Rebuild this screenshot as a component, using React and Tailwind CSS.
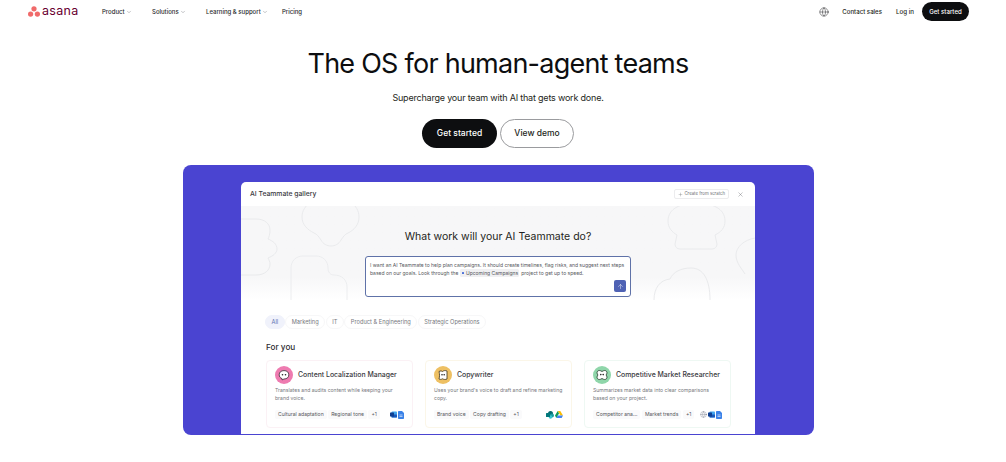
import React from 'react';
import { ChevronDown, Globe, Plus, X, ArrowUp } from 'lucide-react';

const navLeft = [
  { label: 'Product', caret: true, w: 'w-[50px]' },
  { label: 'Solutions', caret: true, w: 'w-[54px]' },
  { label: 'Learning & support', caret: true, w: 'w-[76px]' },
  { label: 'Pricing', caret: false, w: 'w-auto' },
];

const tabs = [
  { label: 'All', active: true },
  { label: 'Marketing' },
  { label: 'IT' },
  { label: 'Product & Engineering' },
  { label: 'Strategic Operations' },
];

const AsanaLogo = () => (
  <svg width="12" height="11" viewBox="0 0 11 10" className="shrink-0">
    <circle cx="5.5" cy="2.5" r="2.4" fill="#f06a6a" />
    <circle cx="2.4" cy="7.4" r="2.4" fill="#f06a6a" />
    <circle cx="8.6" cy="7.4" r="2.4" fill="#f06a6a" />
  </svg>
);

const PinkFace = () => (
  <svg width="18" height="18" viewBox="0 0 18 18">
    <circle cx="9" cy="9" r="9" fill="#ee7bb0" />
    <path d="M9 4.6c3 0 4.8 1.700 4.800 4.200S12 13 9 13l-2 .9v-1.300C5.200 12 4.200 10.600 4.200 8.800 4.200 6.300 6 4.600 9 4.600z" fill="#fff" stroke="#3a2a35" strokeWidth="0.8" />
    <circle cx="7.500" cy="8.800" r="0.800" fill="#222" />
    <circle cx="10.500" cy="8.800" r="0.800" fill="#222" />
  </svg>
);

const YellowFace = () => (
  <svg width="18" height="18" viewBox="0 0 18 18">
    <circle cx="9" cy="9" r="9" fill="#eec063" />
    <path d="M5 5.500c1.500-.8 2.500-.6 3.500 0 1.300-1 3-1.200 4.500-.5v8c-1.500.7-3 .6-4.500-.2-1.200.7-2.400.8-3.500.2 .7-2.500.7-5 0-7.500z" fill="#fff" stroke="#3d321c" strokeWidth="0.8" />
    <circle cx="8" cy="8.800" r="0.800" fill="#222" />
    <circle cx="10.200" cy="8.800" r="0.800" fill="#222" />
  </svg>
);

const GreenFace = () => (
  <svg width="18" height="18" viewBox="0 0 18 18">
    <circle cx="9" cy="9" r="9" fill="#8fd6aa" />
    <path d="M6.300 4.500c1 0 1.800.5 2.700 1 .9-.5 1.700-1 2.700-1 1.500 0 2.300 1.200 2.300 2.300 0 1-.5 1.600-1 2.200.5.600 1 1.200 1 2.200 0 1.100-.8 2.300-2.300 2.300-1 0-1.800-.5-2.700-1-.9.500-1.700 1-2.700 1C4.800 13.500 4 12.300 4 11.200c0-1 .5-1.600 1-2.200-.5-.6-1-1.200-1-2.200C4 5.700 4.800 4.500 6.300 4.500z" fill="#fff" stroke="#24382c" strokeWidth="0.8" />
    <circle cx="7.800" cy="8.600" r="0.800" fill="#222" />
    <circle cx="10.200" cy="8.600" r="0.800" fill="#222" />
  </svg>
);

const WordIcon = () => (
  <svg width="7" height="7" viewBox="0 0 7 7">
    <rect x="1.500" y="0.500" width="5.500" height="6" rx="0.800" fill="#41a5ee" />
    <rect x="1.500" y="3.500" width="5.500" height="3" rx="0.500" fill="#185abd" />
    <rect x="0" y="1.500" width="4" height="4" rx="0.500" fill="#103f91" />
  </svg>
);

const DocIcon = () => (
  <svg width="6" height="8" viewBox="0 0 6 8">
    <path d="M0.800 0H4l2 2v5.200a.8.8 0 0 1-.8.800H.8a.8.8 0 0 1-.8-.8V.8A.8.8 0 0 1 .8 0z" fill="#3b82e8" />
    <path d="M1.500 4h3M1.500 5.500h3" stroke="#fff" strokeWidth="0.600" />
  </svg>
);

const SharepointIcon = () => (
  <svg width="8" height="8" viewBox="0 0 8 8">
    <circle cx="4.500" cy="2.500" r="2.500" fill="#036c70" />
    <circle cx="6" cy="4.500" r="2" fill="#1a9ba1" />
    <circle cx="4.500" cy="6" r="1.800" fill="#37c6d0" />
    <rect x="0" y="2" width="4" height="4" rx="0.500" fill="#03787c" />
  </svg>
);

const DriveIcon = () => (
  <svg width="8" height="7" viewBox="0 0 8 7">
    <path d="M2.700 0h2.600l2.700 4.600H5.400z" fill="#fbbc04" />
    <path d="M2.700 0L0 4.600 1.300 7l2.700-4.600z" fill="#0f9d58" />
    <path d="M1.300 7h5.400L8 4.600H2.600z" fill="#4285f4" />
  </svg>
);

const cards = [
  {
    title: 'Content Localization Manager',
    desc: 'Translates and audits content while keeping your brand voice.',
    tags: ['Cultural adaptation', 'Regional tone', '+1'],
    face: <PinkFace />,
    border: 'border-[#fbf1f5]',
    apps: [<WordIcon key="w" />, <DocIcon key="d" />],
  },
  {
    title: 'Copywriter',
    desc: "Uses your brand's voice to draft and refine marketing copy.",
    tags: ['Brand voice', 'Copy drafting', '+1'],
    face: <YellowFace />,
    border: 'border-[#fbf6e8]',
    apps: [<SharepointIcon key="s" />, <DriveIcon key="g" />],
  },
  {
    title: 'Competitive Market Researcher',
    desc: 'Summarizes market data into clear comparisons based on your project.',
    tags: ['Competitor ana...', 'Market trends', '+1'],
    face: <GreenFace />,
    border: 'border-[#eef8f3]',
    apps: [<Globe key="g" size={7} strokeWidth={1.2} className="text-gray-500" />, <WordIcon key="w" />, <DocIcon key="d" />],
  },
];

// faint outlines behind the prompt box
const Blobs = () => (
  <svg className="absolute left-0 top-0 h-[94px] w-[514px]" viewBox="0 0 514 94" fill="none" stroke="#e9eaec" strokeWidth="1">
    <path d="M0 13h15c9 0 14 5 14 11 0 4-1 7-2 9 5 2 9 5 9 10 0 4-4 7-9 9 1 2 2 4 2 6 0 6-5 11-14 11H0" />
    <path d="M70-4c-6 4-9 9-9 15 0 8 6 13 12 16 3 1 5 4 7 7 2 4 6 6 10 6s8-2 10-6c2-3 4-6 7-7 6-3 11-8 11-16 0-6-3-11-8-15" />
    <path d="M50 94V62c0-7 5-12 12-12h13c7 0 12 5 12 12 0 4 2 7 6 7 8 0 13 5 13 12v13" strokeWidth="0.800" />
    <path d="M441-2c-2 2-3 2-5 3-6 3-9 8-9 14 0 7 4 11 9 14l-2 9c0 3 2 5 5 5h32c3 0 5-2 5-5l-2-9c6-3 10-7 10-14 0-6-3-11-9-14-2-1-3-1-5-3" />
    <path d="M514 32c-11 2-19 9-19 17 0 8 6 14 9 19" />
    <path d="M413 94c0-12 6-20 16-21 3-7 11-11 21-11 12 0 19 11 19 32" />
  </svg>
);

const AgentCard = ({ card }) => (
  <div className={`flex h-[68px] w-[147px] flex-col rounded-[4px] border bg-white px-[8px] pt-[5px] ${card.border}`}>
    <div className="flex items-center gap-[5px]">
      <div className="h-[18px] w-[18px] shrink-0">{card.face}</div>
      <div className="whitespace-nowrap text-[6.900px] font-medium text-[#3a3a3e]">{card.title}</div>
    </div>
    <p className="mt-[2px] h-[17px] text-[5.100px] leading-[8px] text-[#77797e]">{card.desc}</p>
    <div className="mt-[7px] flex items-center justify-between">
      <div className="flex items-center gap-[1.500px]">
        {card.tags.map((t) => (
          <span key={t} className="whitespace-nowrap rounded-[2px] bg-[#fafafb] px-[3px] py-[1px] text-[5.100px] leading-[7px] text-[#55575c]">{t}</span>
        ))}
      </div>
      <div className="flex items-center gap-[1px]">{card.apps}</div>
    </div>
  </div>
);

export default function App() {
  return (
    <div className="min-h-[462px] bg-white pr-[10px] font-['Inter',sans-serif] text-[#0d0e10]">
      <nav className="flex h-[23px] items-center pl-[28px] pr-[27px]">
        <div className="flex w-[74px] items-center gap-[2px]">
          <AsanaLogo />
          <span className="text-[12.500px] leading-none tracking-[0.3px] text-[#690031]">asana</span>
        </div>
        <div className="flex items-center">
          {navLeft.map((n) => (
            <div key={n.label} className={`flex items-center gap-[1px] whitespace-nowrap text-[6px] font-medium text-[#2a2b2d] ${n.w}`}>
              {n.label}
              {n.caret && <ChevronDown size={6} strokeWidth={1.400} className="text-[#55575c]" />}
            </div>
          ))}
        </div>
        <div className="ml-auto flex items-center">
          <Globe size={10} strokeWidth={1.200} className="mr-[13px] text-[#2a2b2d]" />
          <span className="mr-[14px] whitespace-nowrap text-[6.100px] font-medium text-[#1e1f21]">Contact sales</span>
          <span className="mr-[8px] whitespace-nowrap text-[6.200px] font-medium text-[#1e1f21]">Log in</span>
          <button className="h-[19px] w-[47px] rounded-full bg-[#0d0e10] text-[6.100px] font-medium text-white">Get started</button>
        </div>
      </nav>

      <header className="flex flex-col items-center">
        <h1 className="mt-[23px] text-[27px] font-normal leading-[36px] tracking-[-0.75px]">The OS for human-agent teams</h1>
        <p className="mt-[9px] text-[9px] leading-[14px] tracking-[-0.2px] text-[#1e1f21]">Supercharge your team with AI that gets work done.</p>
        <div className="mt-[14px] flex items-center gap-[3px]">
          <button className="h-[29px] w-[75px] rounded-full bg-[#0d0e10] text-[8.500px] font-medium text-white">Get started</button>
          <button className="h-[29px] w-[74px] rounded-full border border-[#9a9b9e] bg-white text-[8.500px] font-medium text-[#1e1f21]">View demo</button>
        </div>
      </header>

      <section className="mx-auto mt-[17px] flex h-[269.5px] w-[631px] justify-center rounded-[8px] bg-[#4a44d1] pt-[17px]">
        <div className="flex h-[252px] w-[514px] flex-col overflow-hidden rounded-t-[5px] bg-white">
          <div className="flex h-[24px] shrink-0 items-center justify-between pl-[9px] pr-[11px]">
            <span className="text-[6.800px] font-medium text-[#3a3a3e]">AI Teammate gallery</span>
            <div className="flex items-center gap-[8px]">
              <span className="flex h-[10px] items-center gap-[1px] rounded-[2px] border border-[#ececee] px-[3px] text-[4.300px] text-[#6b6d72]">
                <Plus size={5} strokeWidth={1.500} />
                Create from scratch
              </span>
              <X size={7} strokeWidth={1.200} className="text-[#55575c]" />
            </div>
          </div>

          <div className="relative flex h-[94px] shrink-0 flex-col items-center bg-gradient-to-b from-[#f7f7f8] from-75% to-white">
            <Blobs />
            <h2 className="relative mt-[23px] text-[10.500px] leading-[16px] text-[#1e1f21]">What work will your AI Teammate do?</h2>
            <div className="relative mt-[11px] h-[41px] w-[266px] rounded-[3px] border border-[#5f72a8] bg-white px-[4px] pt-[4px] text-[5px] leading-[8px] text-[#55575c]">
              <p className="whitespace-nowrap">I want an AI Teammate to help plan campaigns. It should create timelines, flag risks, and suggest next steps</p>
              <p className="flex items-center whitespace-nowrap">
                based on our goals. Look through the
                <span className="mx-[2px] flex items-center gap-[0.500px] rounded-[1.500px] bg-[#f0f0f2] px-[1px]">
                  <span className="mx-[1px] h-[2px] w-[2px] rounded-[0.500px] bg-[#4a6fd8]" />
                  Upcoming Campaigns
                </span>
                project to get up to speed.
              </p>
              <div className="absolute bottom-[4px] right-[4px] flex h-[12px] w-[12px] items-center justify-center rounded-[2px] bg-[#4f62b4]">
                <ArrowUp size={7} strokeWidth={1.500} className="text-white" />
              </div>
            </div>
          </div>

          <div className="flex flex-col pl-[25px] pt-[15px]">
            <div className="-ml-[1px] flex items-center gap-[0.500px]">
              {tabs.map((t) => (
                <span
                  key={t.label}
                  className={`flex h-[14px] items-center whitespace-nowrap rounded-full border px-[5.500px] text-[5.700px] ${t.active ? 'border-[#f0f2fb] bg-[#f0f2fb] text-[#5a6fb0]' : 'border-[#f7f7f8] text-[#77797e]'}`}
                >
                  {t.label}
                </span>
              ))}
            </div>
            <div className="mt-[12px] text-[8.200px] font-medium leading-[12px] text-[#2d2d30]">For you</div>
            <div className="mt-[7px] flex gap-[12px]">
              {cards.map((c) => (
                <AgentCard key={c.title} card={c} />
              ))}
            </div>
          </div>
        </div>
      </section>
    </div>
  );
}
